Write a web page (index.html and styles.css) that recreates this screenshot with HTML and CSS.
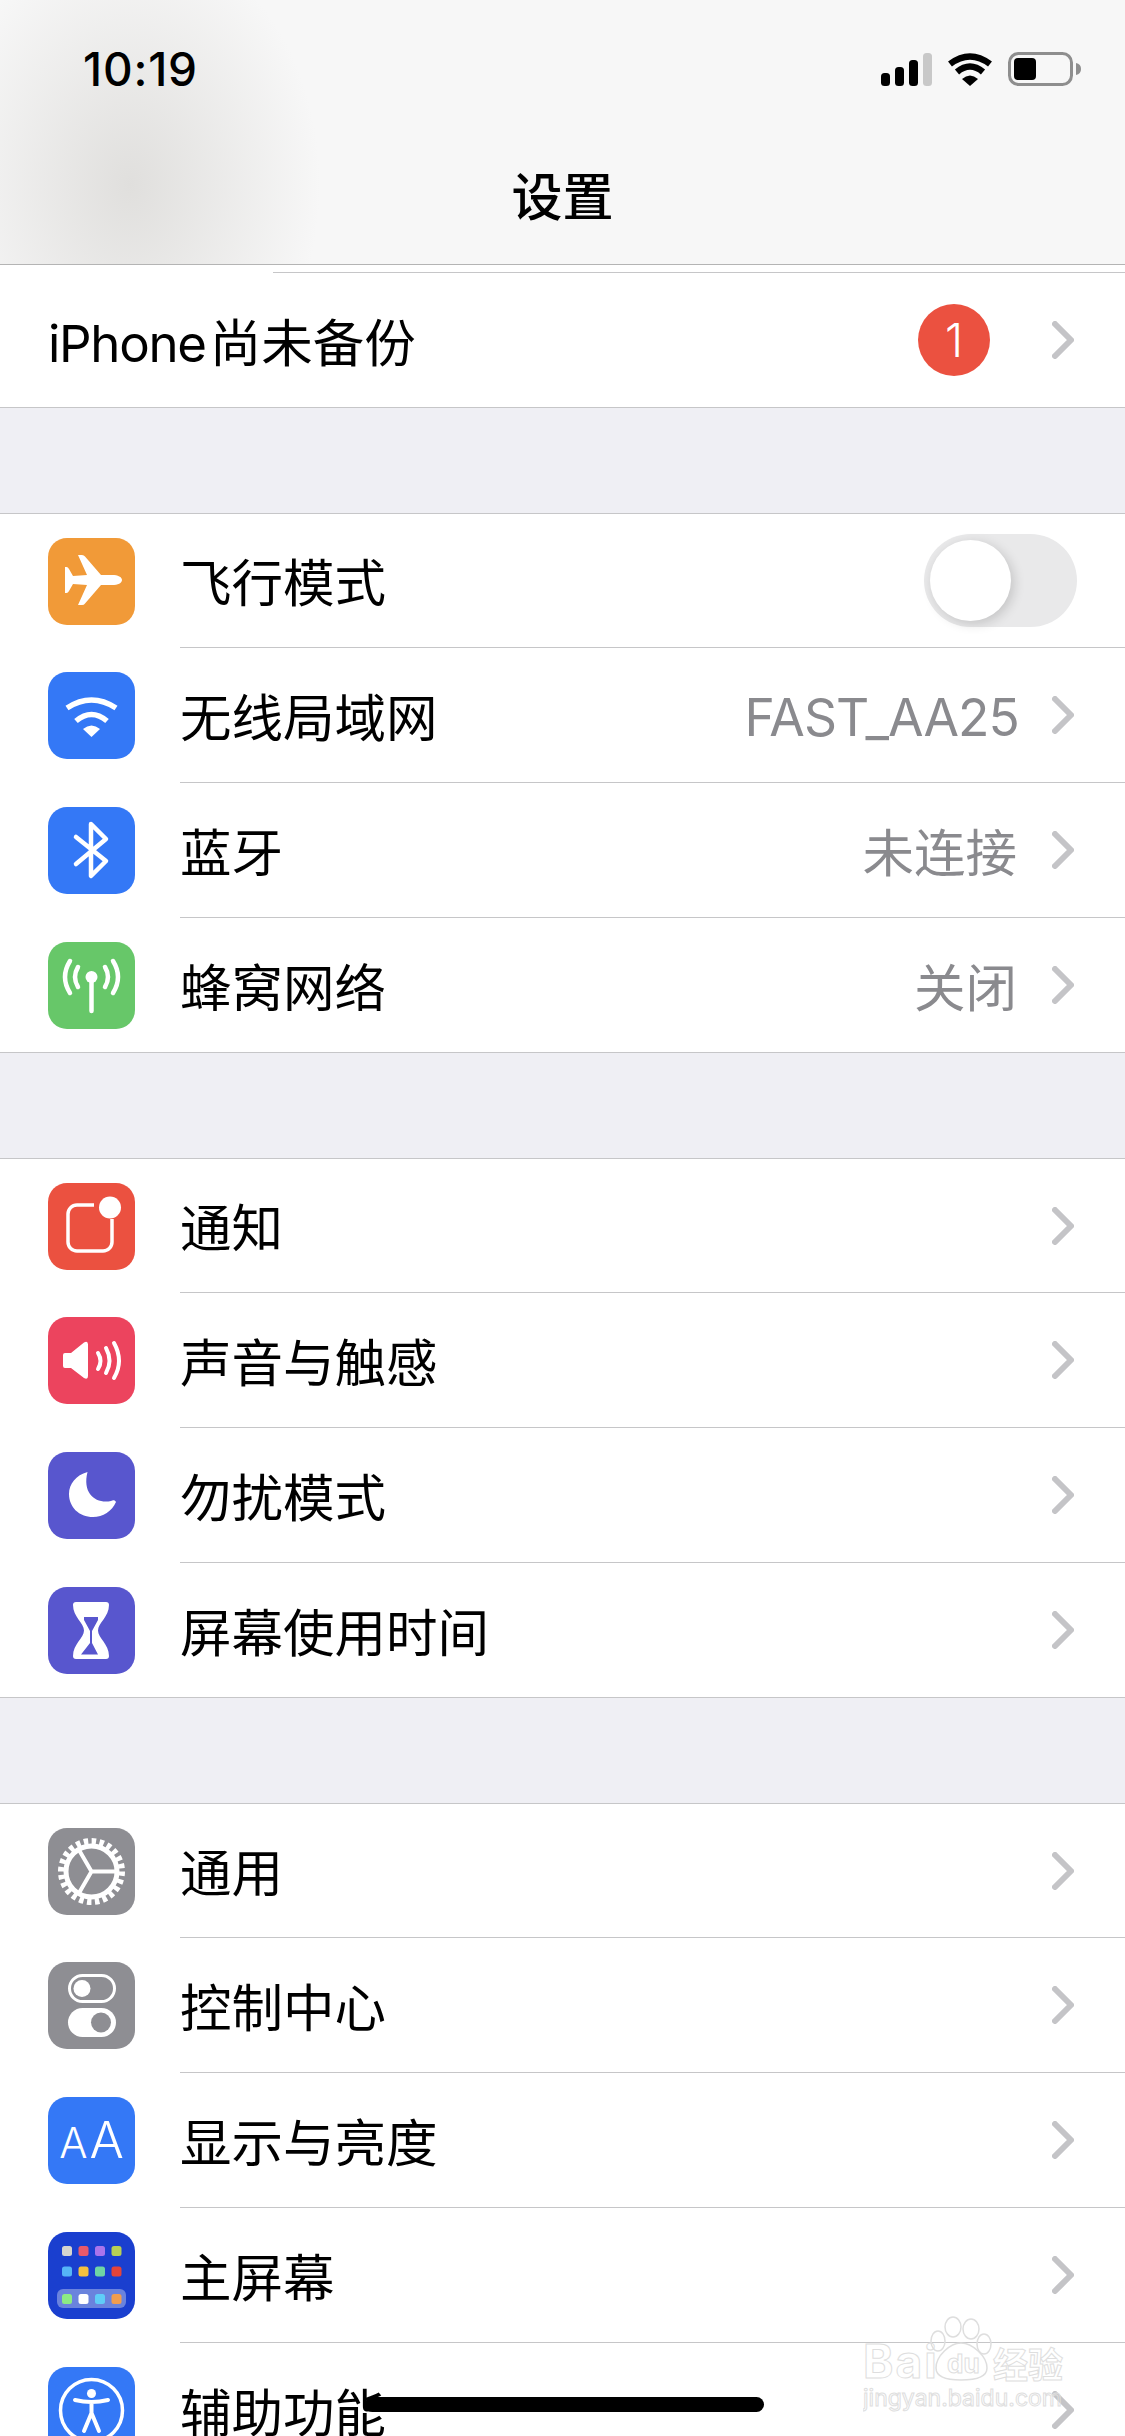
FILE: index.html
```html
<!DOCTYPE html>
<html lang="zh-CN">
<head>
    <meta charset="UTF-8">
    <meta name="viewport" content="width=device-width, initial-scale=1.0">
    <title>设置</title>
    <link rel="stylesheet" href="styles.css">
</head>
<body>
    <div class="screen">
        <header class="nav">
            <div class="status">
                <span class="time">10:19</span>
                <div class="status-icons">
                    <svg class="signal" width="51" height="33" viewBox="0 0 51 33">
                        <rect x="0" y="20" width="9" height="13" rx="3.5"/>
                        <rect x="14" y="14" width="9" height="19" rx="3.5"/>
                        <rect x="28" y="7" width="9" height="26" rx="3.5"/>
                        <rect x="42" y="0" width="9" height="33" rx="3.5" fill="#c8c8c8"/>
                    </svg>
                    <svg class="status-wifi" width="46" height="34" viewBox="0 0 46 34">
                        <path d="M3 12Q23-3 43 12" fill="none" stroke="#000" stroke-width="6.500"/>
                        <path d="M10 20Q23 9 36 20" fill="none" stroke="#000" stroke-width="6.500"/>
                        <path d="M15 27Q23 20 31 27L23 34Z"/>
                    </svg>
                    <svg class="battery" width="74" height="34" viewBox="0 0 74 34">
                        <rect x="1.5" y="1.5" width="62" height="31" rx="9" fill="none" stroke="#8e8e8e" stroke-width="3"/>
                        <rect x="6" y="6" width="22" height="22" rx="4"/>
                        <path d="M68 11q5 1 5 6t-5 6z" fill="#8e8e8e"/>
                    </svg>
                </div>
            </div>
            <h1 class="title">设置</h1>
        </header>

        <section class="group group-first">
            <div class="top-line"></div>
            <div class="row row-plain">
                <div class="row-body">
                    <span class="label"><span class="latin">iPhone</span>尚未备份</span>
                    <span class="badge">1</span>
                    <svg class="chevron" width="22" height="38" viewBox="0 0 22 38"><path d="M3 3L19 19L3 35"/></svg>
                </div>
            </div>
        </section>

        <section class="group">
            <div class="row">
                <svg class="icon icon-orange" viewBox="0 0 87 87">
                    <path fill="#fff" d="M74 42c0-3-4-5-10-5H53L37 18.500q-1-1.500-3-1.500h-4L39 37l-14 1-4-7q-1-2-2.500-2H17v26h1.500q1.500 0 2.500-2l4-7 14 1-9 20h4q2 0 3-1.500L53 47h11c6 0 10-2 10-5z"/>
                </svg>
                <div class="row-body">
                    <span class="label">飞行模式</span>
                    <div class="switch"><div class="knob"></div></div>
                </div>
            </div>
            <div class="row">
                <svg class="icon icon-blue" viewBox="0 0 87 87">
                    <g fill="none" stroke="#fff" stroke-width="5.500">
                        <path d="M19 36Q43.500 20 68 36"/>
                        <path d="M28 49Q43.500 36 59 49"/>
                    </g>
                    <path fill="#fff" d="M35 57Q43.500 50 52 57L43.500 65Z"/>
                </svg>
                <div class="row-body">
                    <span class="label">无线局域网</span>
                    <span class="value value-latin">FAST_AA25</span>
                    <svg class="chevron" width="22" height="38" viewBox="0 0 22 38"><path d="M3 3L19 19L3 35"/></svg>
                </div>
            </div>
            <div class="row">
                <svg class="icon icon-blue" viewBox="0 0 87 87">
                    <path fill="none" stroke="#fff" stroke-width="4.500" stroke-linecap="round" stroke-linejoin="round" d="M28 30L58 54L43 69V17L58 32L28 57"/>
                </svg>
                <div class="row-body">
                    <span class="label">蓝牙</span>
                    <span class="value">未连接</span>
                    <svg class="chevron" width="22" height="38" viewBox="0 0 22 38"><path d="M3 3L19 19L3 35"/></svg>
                </div>
            </div>
            <div class="row">
                <svg class="icon icon-green" viewBox="0 0 87 87">
                    <circle cx="43.500" cy="35" r="6" fill="#fff"/>
                    <g fill="none" stroke="#fff" stroke-width="4.500" stroke-linecap="round">
                        <path d="M43.500 36V69"/>
                        <path d="M22 19Q12 35 22 51"/>
                        <path d="M30 25Q24 35 30 45"/>
                        <path d="M65 19Q75 35 65 51"/>
                        <path d="M57 25Q63 35 57 45"/>
                    </g>
                </svg>
                <div class="row-body">
                    <span class="label">蜂窝网络</span>
                    <span class="value">关闭</span>
                    <svg class="chevron" width="22" height="38" viewBox="0 0 22 38"><path d="M3 3L19 19L3 35"/></svg>
                </div>
            </div>
        </section>

        <section class="group">
            <div class="row">
                <svg class="icon icon-red" viewBox="0 0 87 87">
                    <path fill="none" stroke="#fff" stroke-width="3.500" d="M46 22H29a9 9 0 0 0-9 9V59a9 9 0 0 0 9 9H55a9 9 0 0 0 9-9V36"/>
                    <circle cx="62" cy="24.500" r="11" fill="#fff"/>
                </svg>
                <div class="row-body">
                    <span class="label">通知</span>
                    <svg class="chevron" width="22" height="38" viewBox="0 0 22 38"><path d="M3 3L19 19L3 35"/></svg>
                </div>
            </div>
            <div class="row">
                <svg class="icon icon-pink" viewBox="0 0 87 87">
                    <path fill="#fff" d="M15 38q0-2 2-2h6L36 25.500q4-2 4 2V59q0 4-4 2L23 51h-6q-2 0-2-2z"/>
                    <g fill="none" stroke="#fff" stroke-width="4" stroke-linecap="round">
                        <path d="M50 36Q55 44 50 52"/>
                        <path d="M58 31Q65 44 58 56"/>
                        <path d="M66 26Q76 44 66 61"/>
                    </g>
                </svg>
                <div class="row-body">
                    <span class="label">声音与触感</span>
                    <svg class="chevron" width="22" height="38" viewBox="0 0 22 38"><path d="M3 3L19 19L3 35"/></svg>
                </div>
            </div>
            <div class="row">
                <svg class="icon icon-indigo" viewBox="0 0 87 87">
                    <path fill="#fff" d="M39.500 20C28 23 21 32 21 42C21 55 31 65 45 65C55 65 64 59 68 50C67 48 65 48 63 49C48 52 34 42 39.500 20Z"/>
                </svg>
                <div class="row-body">
                    <span class="label">勿扰模式</span>
                    <svg class="chevron" width="22" height="38" viewBox="0 0 22 38"><path d="M3 3L19 19L3 35"/></svg>
                </div>
            </div>
            <div class="row">
                <svg class="icon icon-indigo" viewBox="0 0 87 87">
                    <path fill="#fff" d="M28 15H58q3 0 3 3C61 30 50 36 50 43.500C50 51 61 57 61 69q0 3-3 3H28q-3 0-3-3C25 57 36 51 36 43.500C36 36 25 30 25 18q0-3 3-3z"/>
                    <path fill="#5856ce" d="M36 30H50V33L44 44V56L50 67.500H33L42 56V44L36 33Z"/>
                </svg>
                <div class="row-body">
                    <span class="label">屏幕使用时间</span>
                    <svg class="chevron" width="22" height="38" viewBox="0 0 22 38"><path d="M3 3L19 19L3 35"/></svg>
                </div>
            </div>
        </section>

        <section class="group">
            <div class="row">
                <svg class="icon icon-gray" viewBox="0 0 87 87">
                    <g fill="none" stroke="#fff">
                        <circle cx="43.500" cy="43.500" r="30" stroke-width="7" stroke-dasharray="4.400 3.450"/>
                        <circle cx="43.500" cy="43.500" r="25.500" stroke-width="5"/>
                        <path stroke-width="4" d="M43.500 43.500H68M43.500 43.500L31 22M43.500 43.500L31 65"/>
                    </g>
                </svg>
                <div class="row-body">
                    <span class="label">通用</span>
                    <svg class="chevron" width="22" height="38" viewBox="0 0 22 38"><path d="M3 3L19 19L3 35"/></svg>
                </div>
            </div>
            <div class="row">
                <svg class="icon icon-gray" viewBox="0 0 87 87">
                    <rect x="21.500" y="13.500" width="45" height="26" rx="13" fill="none" stroke="#fff" stroke-width="3"/>
                    <circle cx="34" cy="26.500" r="8.500" fill="#fff"/>
                    <rect x="20" y="46" width="48" height="29" rx="14.500" fill="#fff"/>
                    <circle cx="53" cy="60.500" r="10" fill="#8e8e93"/>
                </svg>
                <div class="row-body">
                    <span class="label">控制中心</span>
                    <svg class="chevron" width="22" height="38" viewBox="0 0 22 38"><path d="M3 3L19 19L3 35"/></svg>
                </div>
            </div>
            <div class="row">
                <div class="icon icon-blue icon-text"><span class="aa-small">A</span><span class="aa-big">A</span></div>
                <div class="row-body">
                    <span class="label">显示与亮度</span>
                    <svg class="chevron" width="22" height="38" viewBox="0 0 22 38"><path d="M3 3L19 19L3 35"/></svg>
                </div>
            </div>
            <div class="row">
                <svg class="icon icon-home" viewBox="0 0 87 87">
                    <rect x="14" y="14" width="10" height="10" rx="2.500" fill="#d5d5cf"/>
                    <rect x="30.500" y="14" width="10" height="10" rx="2.500" fill="#ea5a6b"/>
                    <rect x="47" y="14" width="10" height="10" rx="2.500" fill="#a974ec"/>
                    <rect x="63.500" y="14" width="10" height="10" rx="2.500" fill="#b7d055"/>
                    <rect x="14" y="34.500" width="10" height="10" rx="2.500" fill="#55b5f7"/>
                    <rect x="30.500" y="34.500" width="10" height="10" rx="2.500" fill="#f5c13f"/>
                    <rect x="47" y="34.500" width="10" height="10" rx="2.500" fill="#6fd5a4"/>
                    <rect x="63.500" y="34.500" width="10" height="10" rx="2.500" fill="#e5443a"/>
                    <rect x="9" y="57" width="69" height="19" rx="6" fill="#6a83dd"/>
                    <rect x="14" y="62" width="10" height="10" rx="2.500" fill="#8ceb84"/>
                    <rect x="30.500" y="62" width="10" height="10" rx="2.500" fill="#fff"/>
                    <rect x="47" y="62" width="10" height="10" rx="2.500" fill="#5fcdf8"/>
                    <rect x="63.500" y="62" width="10" height="10" rx="2.500" fill="#f19d4f"/>
                </svg>
                <div class="row-body">
                    <span class="label">主屏幕</span>
                    <svg class="chevron" width="22" height="38" viewBox="0 0 22 38"><path d="M3 3L19 19L3 35"/></svg>
                </div>
            </div>
            <div class="row">
                <svg class="icon icon-blue" viewBox="0 0 87 87">
                    <circle cx="43.500" cy="43.500" r="31" fill="none" stroke="#fff" stroke-width="3.500"/>
                    <circle cx="43.500" cy="26.500" r="4.500" fill="#fff"/>
                    <path fill="none" stroke="#fff" stroke-width="4" stroke-linecap="round" stroke-linejoin="round" d="M27 33Q43.500 37 60 33M43.500 36V46L36 64M43.500 46L51 64"/>
                </svg>
                <div class="row-body">
                    <span class="label">辅助功能</span>
                    <svg class="chevron" width="22" height="38" viewBox="0 0 22 38"><path d="M3 3L19 19L3 35"/></svg>
                </div>
            </div>
        </section>

        <div class="home-bar"></div>

        <svg class="watermark" width="204" height="100" viewBox="0 0 204 100">
            <ellipse cx="90" cy="11" rx="8" ry="10"/>
            <ellipse cx="108" cy="13" rx="8" ry="10"/>
            <ellipse cx="75" cy="25" rx="7" ry="10"/>
            <ellipse cx="121" cy="28" rx="7" ry="10"/>
            <path d="M73 52C73 40 87 27 98 27C109 27 124 40 124 52C124 60 116 64 98 64C80 64 73 60 73 52Z"/>
            <text x="0" y="62" class="wm-big">Bai</text>
            <text x="84" y="57" class="wm-du">du</text>
            <text x="130" y="62" class="wm-cn">经验</text>
            <text x="0" y="90" class="wm-url">jingyan.baidu.com</text>
        </svg>
    </div>
</body>
</html>
```

FILE: styles.css
```css
body {
    margin: 0;
    font-family: Inter, "Noto Sans CJK SC", sans-serif;
    color: #000;
}

.screen {
    position: relative;
    width: 1125px;
    height: 2436px;
    overflow: hidden;
    background-color: #efeff4;
}

.nav {
    height: 264px;
    border-bottom: 1px solid #b4b4b4;
    background: radial-gradient(ellipse 190px 250px at 130px 185px, #e0dfdd, rgba(247, 247, 247, 0)), #f7f7f7;
}

.status {
    display: flex;
    align-items: center;
    justify-content: space-between;
    height: 138px;
    padding: 0 43px 0 83px;
}

.time {
    font-size: 46px;
    font-weight: 500;
    letter-spacing: 0.8px;
}

.status-icons {
    display: flex;
    align-items: center;
    gap: 15px;
}

.title {
    margin: 0;
    font-size: 51px;
    font-weight: 500;
    line-height: 120px;
    text-align: center;
}

.group {
    margin-top: 105px;
    background-color: #fff;
    border-top: 1px solid #c6c6c8;
    border-bottom: 1px solid #c6c6c8;
}

.group-first {
    margin-top: 0;
    border-top: none;
}

.top-line {
    height: 7px;
    border-bottom: 1px solid #c6c6c8;
}

.group-first .top-line {
    margin-left: 273px;
}

.row {
    display: flex;
    align-items: stretch;
    box-sizing: border-box;
    height: 135px;
    padding-left: 48px;
}

.row:first-child {
    height: 134px;
}

.row-plain {
    height: 134px;
}

.row:last-child {
    height: 134px;
}

.row-body {
    flex: 1;
    display: flex;
    align-items: center;
    margin-left: 45px;
    padding-right: 52px;
    border-bottom: 1px solid #c6c6c8;
}

.row:last-child .row-body {
    border-bottom: none;
}

.row-plain .row-body {
    margin-left: 0;
}

.icon {
    flex: none;
    align-self: center;
    width: 87px;
    height: 87px;
    border-radius: 19px;
}

.icon-orange { background-color: #f19a38; }
.icon-blue { background-color: #3478f6; }
.icon-green { background-color: #67c769; }
.icon-red { background-color: #eb5140; }
.icon-pink { background-color: #ec445e; }
.icon-indigo { background-color: #5856ce; }
.icon-gray { background-color: #8e8e93; }
.icon-home { background-color: #1a3fcf; }

.icon-text {
    display: flex;
    align-items: baseline;
    justify-content: center;
    gap: 2px;
    box-sizing: border-box;
    padding-top: 13px;
    color: #fff;
    font-weight: 300;
    line-height: 60px;
}

.aa-small {
    font-size: 42px;
}

.aa-big {
    font-size: 51px;
}

.label {
    flex: 1;
    padding-bottom: 2px;
    font-size: 51.5px;
    white-space: nowrap;
}

.latin {
    margin-right: 4px;
    font-size: 51px;
    letter-spacing: -1.3px;
}

.value {
    margin-right: 35px;
    padding-bottom: 2px;
    font-size: 51.5px;
    color: #8a8a8e;
}

.value-latin {
    margin-right: 33px;
    padding: 3px 0 0;
    letter-spacing: -0.9px;
}

.chevron {
    flex: none;
    margin-right: -1px;
    fill: none;
    stroke: #c4c4c7;
    stroke-width: 6;
    stroke-linecap: round;
    stroke-linejoin: round;
}

.badge {
    width: 72px;
    height: 72px;
    margin-right: 62px;
    border-radius: 50%;
    background-color: #eb5140;
    color: #fff;
    font-size: 46px;
    font-weight: 300;
    line-height: 72px;
    text-align: center;
}

.switch {
    display: flex;
    align-items: center;
    box-sizing: border-box;
    width: 153px;
    height: 93px;
    margin-right: -4px;
    padding-left: 6px;
    border-radius: 47px;
    background-color: #e9e9ea;
}

.knob {
    width: 81px;
    height: 81px;
    border-radius: 50%;
    background-color: #fff;
    box-shadow: 3px 3px 12px rgba(0, 0, 0, 0.16);
}

.home-bar {
    position: absolute;
    left: 365px;
    top: 2397px;
    width: 399px;
    height: 15px;
    border-radius: 8px;
    background-color: #000;
}

.watermark {
    position: absolute;
    left: 863px;
    top: 2316px;
    fill: none;
    stroke: #dedede;
    stroke-width: 1.5;
}

.watermark text {
    font-family: Inter, "Noto Sans CJK SC", sans-serif;
    stroke-width: 1;
}

.wm-big {
    font-size: 46px;
    font-weight: 700;
    letter-spacing: 2px;
}

.wm-du {
    font-size: 26px;
    font-weight: 700;
}

.wm-cn {
    font-size: 35px;
    font-weight: 700;
}

.wm-url {
    font-size: 23px;
}
```
